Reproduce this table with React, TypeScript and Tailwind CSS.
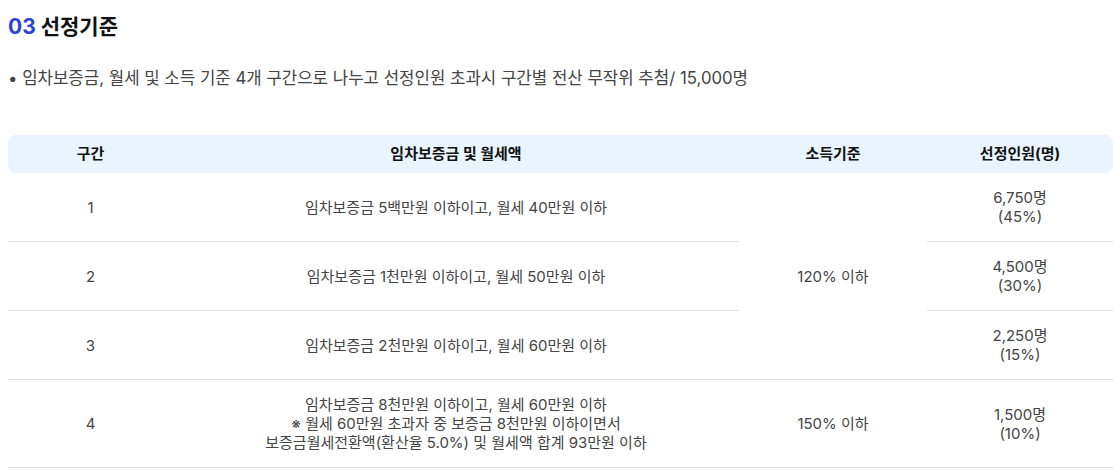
import React from 'react';

interface Row {
  no: string;
  cond: string[];
  people: string;
  ratio: string;
}

const rows: Row[] = [
  { no: '1', cond: ['임차보증금 5백만원 이하이고, 월세 40만원 이하'], people: '6,750명', ratio: '(45%)' },
  { no: '2', cond: ['임차보증금 1천만원 이하이고, 월세 50만원 이하'], people: '4,500명', ratio: '(30%)' },
  { no: '3', cond: ['임차보증금 2천만원 이하이고, 월세 60만원 이하'], people: '2,250명', ratio: '(15%)' },
  {
    no: '4',
    cond: [
      '임차보증금 8천만원 이하이고, 월세 60만원 이하',
      '※ 월세 60만원 초과자 중 보증금 8천만원 이하이면서',
      '보증금월세전환액(환산율 5.0%) 및 월세액 합계 93만원 이하',
    ],
    people: '1,500명',
    ratio: '(10%)',
  },
];

const cell = 'flex flex-col items-center justify-center text-center border-b border-[#dfe3e8]';

const App: React.FC = () => {
  return (
    <div
      className="w-[1113px] h-[473px] overflow-hidden bg-white pl-2 text-[#444]"
      style={{ fontFamily: 'Inter, "Noto Sans CJK KR", sans-serif' }}
    >
      {/* Title */}
      <h2 className="pt-[12px] text-[21px] leading-[30px] font-bold text-[#111]">
        <span className="text-[#2b45d4]">03</span> 선정기준
      </h2>

      <p className="mt-[23px] text-[16.75px] leading-[26px] text-[#444]">
        • 임차보증금, 월세 및 소득 기준 4개 구간으로 나누고 선정인원 초과시 구간별 전산 무작위 추첨/ 15,000명
      </p>

      {/* Table */}
      <div className="mt-[44px] w-[1105px] text-[15px]">
        <div className="grid grid-cols-[165px_566px_188px_186px] h-[38px] items-center bg-[#eaf4fe] rounded-lg font-bold text-[#111]">
          <div className="text-center">구간</div>
          <div className="text-center">임차보증금 및 월세액</div>
          <div className="text-center">소득기준</div>
          <div className="text-center">선정인원(명)</div>
        </div>

        <div className="grid grid-cols-[165px_566px_188px_186px] grid-rows-[69px_69px_69px_88px] leading-[19px]">
          {rows.map((r, i) => (
            <React.Fragment key={r.no}>
              <div className={cell} style={{ gridRow: i + 1, gridColumn: 1 }}>{r.no}</div>
              <div className={cell} style={{ gridRow: i + 1, gridColumn: 2 }}>
                {r.cond.map(c => <span key={c}>{c}</span>)}
              </div>
              <div className={cell} style={{ gridRow: i + 1, gridColumn: 4 }}>
                <span>{r.people}</span>
                <span>{r.ratio}</span>
              </div>
            </React.Fragment>
          ))}
          <div className={cell} style={{ gridRow: '1 / span 3', gridColumn: 3 }}>120% 이하</div>
          <div className={cell} style={{ gridRow: 4, gridColumn: 3 }}>150% 이하</div>
        </div>
      </div>
    </div>
  );
};

export default App;
